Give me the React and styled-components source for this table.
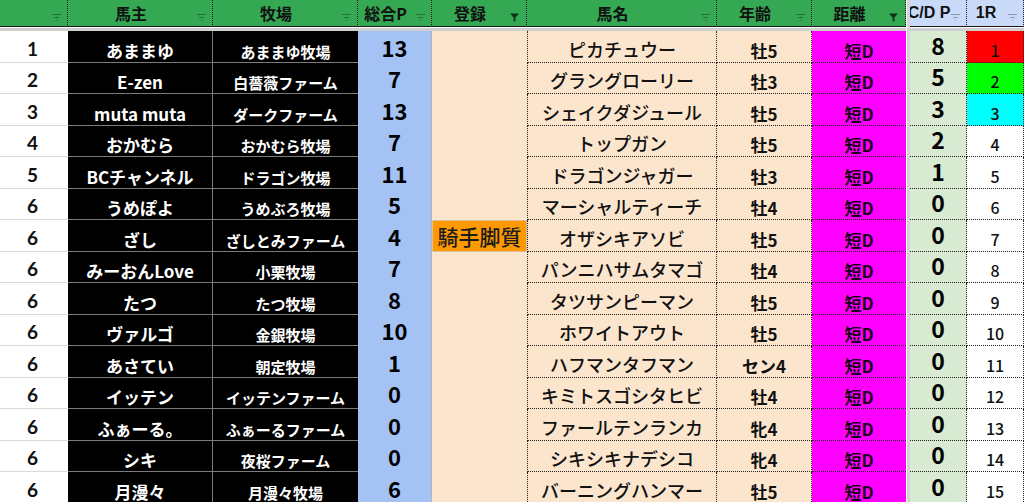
import React from 'react';
import styled, { createGlobalStyle } from 'styled-components';

const JP = `"Noto Sans CJK JP", "Noto Sans", sans-serif`;

const GlobalStyle = createGlobalStyle`
  html, body { margin: 0; padding: 0; background: #fff; overflow: hidden; }
  body { font-family: ${JP}; }
`;

const Sheet = styled.div`
  display: grid;
  grid-template-columns: 68px 145px 145px 74px 95px 190px 95px 94px 4px 57px 57px;
  grid-template-rows: 27px 4px repeat(15, 31.5px);
  width: 1024px;
  height: 502px;
  overflow: hidden;
  font-family: ${JP};
`;

const FreezeGap = styled.div`
  grid-column: 9;
  grid-row: 1 / -1;
  z-index: 2;
  background: #d3d3d3;
  border-left: 1px solid #fff;
  box-sizing: border-box;
`;

const FreezeBar = styled.div`
  grid-column: 1 / -1;
  grid-row: 2;
  border-top: 1px solid #fff;
  background: #cfcfcf;
  box-sizing: border-box;
`;

const HeaderCell = styled.div`
  position: relative;
  display: flex;
  align-items: center;
  justify-content: center;
  padding: 0 18px 1px 0;
  box-sizing: border-box;
  background: ${(p) => (p.$tone === 'blue' ? '#c9daf8' : '#34a853')};
  border-bottom: 1px solid #1b1b1b;
  border-right: 1px dotted #1b1b1b;
  color: #111;
  font-family: ${(p) => (p.$latin ? `"Liberation Sans", Arial, sans-serif` : JP)};
  font-weight: 700;
  font-size: 16px;
  white-space: nowrap;
  overflow: hidden;
`;

const FilterButton = styled.span`
  position: absolute;
  right: ${(p) => (p.$active ? '6px' : '5px')};
  top: 13px;
  width: 12px;
  height: 9px;
  display: flex;
  align-items: flex-start;
  justify-content: center;
  background: ${(p) => (p.$tone === 'blue' ? '#c9daf8' : '#34a853')};
`;

const FilterIcon = ({ active, tone }) => (
  <FilterButton $active={active} $tone={tone}>
    {active ? (
      <svg width="9" height="9" viewBox="0 0 9 9">
        <path d="M0 0.5h9L5.4 4.6V8.6H3.6V4.6Z" fill="#12331a" />
      </svg>
    ) : (
      <svg width="11" height="8" viewBox="0 0 11 8">
        <path
          d="M1 1.5h9M3 4.5h5M4.8 7h1.4"
          stroke={tone === 'blue' ? '#8e9aad' : '#2a6e3c'}
          strokeWidth="1.2"
        />
      </svg>
    )}
  </FilterButton>
);

const Cell = styled.div`
  display: flex;
  align-items: flex-end;
  justify-content: center;
  box-sizing: border-box;
  white-space: nowrap;
  overflow: visible;
  line-height: 1;
  font-family: ${JP};
`;

const RankCell = styled(Cell)`
  background: #fff;
  border-bottom: 1px solid #d9d9d9;
  color: #111;
  font-family: Lato, "Noto Sans", sans-serif;
  font-weight: 700;
  font-size: 19px;
  padding: 0 3px 4px 0;
`;

const OwnerCell = styled(Cell)`
  background: #000;
  color: #fff;
  border-bottom: 1px solid #7b7b7b;
  border-right: 1px solid #7b7b7b;
  font-weight: 700;
  font-size: 17px;
  padding-bottom: 3px;
`;

const FarmCell = styled(Cell)`
  background: #000;
  color: #fff;
  border-bottom: 1px solid #7b7b7b;
  font-weight: 700;
  font-size: 15px;
  padding-bottom: 3px;
`;

const PointCell = styled(Cell)`
  background: #a4c2f4;
  color: #000;
  border-right: 1px solid #b4b4b4;
  font-weight: 700;
  font-size: 22px;
  padding-bottom: 5px;
`;

const EntryCell = styled(Cell)`
  background: ${(p) => (p.$tagged ? '#ff9900' : '#fce5cd')};
  border: ${(p) => (p.$tagged ? '1px solid #d9c0a0' : 'none')};
  color: #1d1d1d;
  font-weight: 500;
  font-size: 21px;
  padding-bottom: 4px;
`;

const HorseCell = styled(Cell)`
  background: #fce5cd;
  color: #111;
  border-left: 1px dotted #222;
  border-right: 1px dotted #222;
  border-bottom: 1px dotted #222;
  font-weight: 500;
  font-size: 18px;
  padding-bottom: 4px;
`;

const AgeCell = styled(Cell)`
  background: #fce5cd;
  color: #111;
  border-right: 1px dotted #222;
  border-bottom: 1px dotted #222;
  font-weight: 700;
  font-size: 17px;
  padding-bottom: 3px;
`;

const DistCell = styled(Cell)`
  background: #ff00ff;
  color: #1a001a;
  border-bottom: 1px dotted #222;
  font-weight: 700;
  font-size: 17px;
  padding-bottom: 3px;
`;

const CdCell = styled(Cell)`
  background: #d9ead3;
  color: #000;
  border-right: 1px dotted #222;
  border-bottom: 1px dotted #222;
  font-weight: 700;
  font-size: 23px;
  line-height: 1.2;
  padding-bottom: 2px;
`;

const placeColors = { 1: '#ff0000', 2: '#00ff00', 3: '#00ffff' };

const RaceCell = styled(Cell)`
  background: ${(p) => placeColors[p.$place] || '#fff'};
  color: #111;
  border-right: 1px dotted #222;
  border-bottom: 1px dotted #222;
  font-weight: 500;
  font-size: 16px;
  padding-bottom: 4px;
`;

const headers = [
  { label: '', tone: 'green' },
  { label: '馬主', tone: 'green' },
  { label: '牧場', tone: 'green' },
  { label: '総合P', tone: 'green' },
  { label: '登録', tone: 'green', active: true },
  { label: '馬名', tone: 'green' },
  { label: '年齢', tone: 'green' },
  { label: '距離', tone: 'green', active: true },
  { label: 'C/D P', tone: 'blue', latin: true },
  { label: '1R', tone: 'blue', latin: true },
];

const rows = [
  [1, 'あままゆ', 'あままゆ牧場', 13, '', 'ピカチュウー', '牡5', '短D', 8, 1],
  [2, 'E-zen', '白薔薇ファーム', 7, '', 'グラングローリー', '牡3', '短D', 5, 2],
  [3, 'muta muta', 'ダークファーム', 13, '', 'シェイクダジュール', '牡5', '短D', 3, 3],
  [4, 'おかむら', 'おかむら牧場', 7, '', 'トップガン', '牡5', '短D', 2, 4],
  [5, 'BCチャンネル', 'ドラゴン牧場', 11, '', 'ドラゴンジャガー', '牡3', '短D', 1, 5],
  [6, 'うめぽよ', 'うめぶろ牧場', 5, '', 'マーシャルティーチ', '牡4', '短D', 0, 6],
  [6, 'ざし', 'ざしとみファーム', 4, '騎手脚質', 'オザシキアソビ', '牡5', '短D', 0, 7],
  [6, 'みーおんLove', '小栗牧場', 7, '', 'パンニハサムタマゴ', '牡4', '短D', 0, 8],
  [6, 'たつ', 'たつ牧場', 8, '', 'タツサンピーマン', '牡5', '短D', 0, 9],
  [6, 'ヴァルゴ', '金銀牧場', 10, '', 'ホワイトアウト', '牡5', '短D', 0, 10],
  [6, 'あさてい', '朝定牧場', 1, '', 'ハフマンタフマン', 'セン4', '短D', 0, 11],
  [6, 'イッテン', 'イッテンファーム', 0, '', 'キミトスゴシタヒビ', '牡4', '短D', 0, 12],
  [6, 'ふぁーる。', 'ふぁーるファーム', 0, '', 'ファールテンランカ', '牝4', '短D', 0, 13],
  [6, 'シキ', '夜桜ファーム', 0, '', 'シキシキナデシコ', '牝4', '短D', 0, 14],
  [6, '月漫々', '月漫々牧場', 6, '', 'バーニングハンマー', '牡5', '短D', 0, 15],
];

export default function App() {
  return (
    <>
      <GlobalStyle />
      <Sheet>
        <FreezeGap />
        <FreezeBar />
        {headers.map((h, i) => (
          <HeaderCell key={`h${i}`} $tone={h.tone} $latin={h.latin}>
            {h.label}
            <FilterIcon active={h.active} tone={h.tone} />
          </HeaderCell>
        ))}
        {rows.map((r, i) => (
          <React.Fragment key={`r${i}`}>
            <RankCell>{r[0]}</RankCell>
            <OwnerCell>{r[1]}</OwnerCell>
            <FarmCell>{r[2]}</FarmCell>
            <PointCell>{r[3]}</PointCell>
            <EntryCell $tagged={!!r[4]}>{r[4]}</EntryCell>
            <HorseCell>{r[5]}</HorseCell>
            <AgeCell>{r[6]}</AgeCell>
            <DistCell>{r[7]}</DistCell>
            <CdCell>{r[8]}</CdCell>
            <RaceCell $place={r[9]}>{r[9]}</RaceCell>
          </React.Fragment>
        ))}
      </Sheet>
    </>
  );
}
